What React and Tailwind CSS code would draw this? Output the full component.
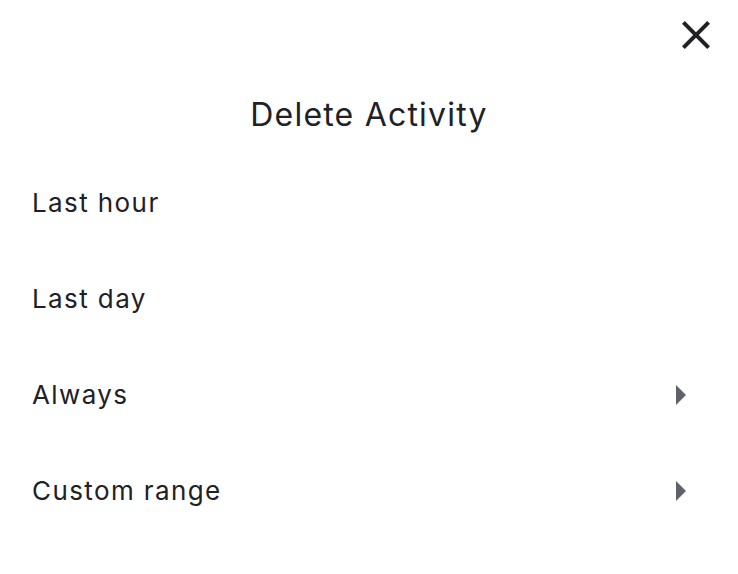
import React from 'react';

const ArrowRight = () => (
  <svg width="48" height="48" viewBox="0 0 24 24" className="text-[#5f6368]">
    <path d="M10 17l5-5-5-5v10z" fill="currentColor" />
  </svg>
);

const CloseIcon = () => (
  <svg width="48" height="48" viewBox="0 0 24 24" className="text-[#202124]">
    <path
      d="M19 6.41L17.59 5 12 10.59 6.41 5 5 6.41 10.59 12 5 17.59 6.41 19 12 13.41 17.59 19 19 17.59 13.41 12z"
      fill="currentColor"
    />
  </svg>
);

const options = [
  { label: 'Last hour', more: false },
  { label: 'Last day', more: false },
  { label: 'Always', more: true },
  { label: 'Custom range', more: true },
];

export default function App() {
  return (
    <div className="w-[738px] h-[574px] bg-white text-[#202124] font-['Inter',sans-serif]">
      {/* Close */}
      <div className="h-[70px] flex items-center justify-end pr-[18px]">
        <button className="flex items-center justify-center">
          <CloseIcon />
        </button>
      </div>

      {/* Title */}
      <div className="h-[85px] pt-[5px] flex items-center justify-center">
        <h1 className="text-[32px] leading-10 font-normal tracking-[1.2px]">Delete Activity</h1>
      </div>

      {/* Options */}
      <div className="flex flex-col">
        {options.map((opt) => (
          <div key={opt.label} className="h-24 flex items-center justify-between pl-8 pr-[34px]">
            <span className="text-[26px] leading-8 tracking-[1.4px]">{opt.label}</span>
            {opt.more && <ArrowRight />}
          </div>
        ))}
      </div>
    </div>
  );
}
